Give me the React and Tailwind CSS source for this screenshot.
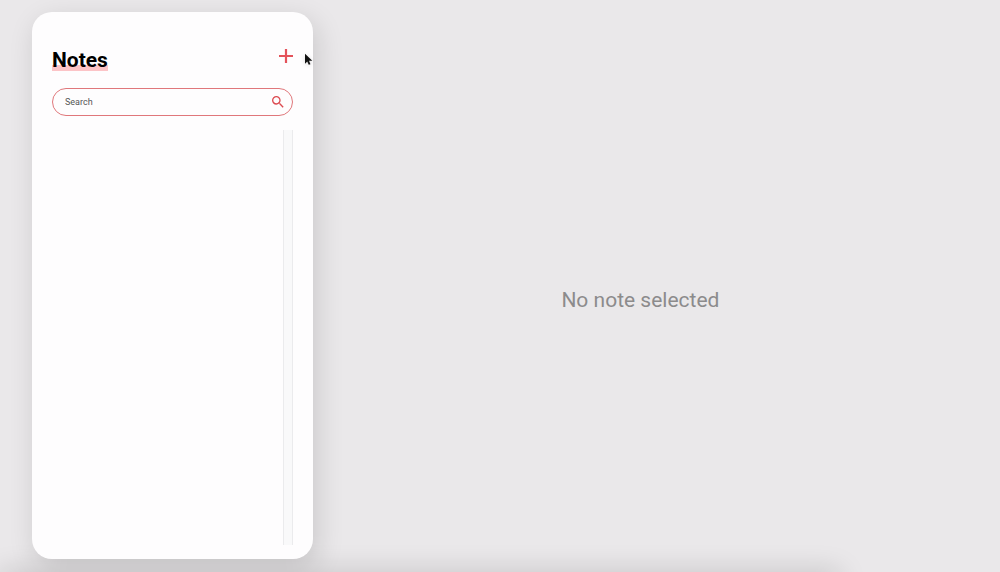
import React from 'react';
import { MdSearch } from 'react-icons/md';

function PlusIcon() {
  return (
    <svg viewBox="0 0 14 14" className="size-3.5" fill="#e4525a" aria-hidden="true">
      <path d="M5.9 0h2.2v5.9H14v2.2H8.1V14H5.9V8.1H0V5.9h5.9z" />
    </svg>
  );
}

function Pointer() {
  return (
    <svg
      viewBox="0 0 12 18"
      className="pointer-events-none absolute top-10 right-0 h-3.5 w-2 overflow-visible drop-shadow-sm"
      aria-hidden="true"
    >
      <path
        d="M0 1v15l3.4-3.2 2.2 5 2.6-1.1-2.2-4.9H11z"
        fill="#111"
      />
    </svg>
  );
}

function Sidebar() {
  return (
    <aside className="relative flex w-[30%] flex-col rounded-[20px] bg-[#fefdfe] px-5 pt-9 pb-3.5 shadow-[4px_8px_28px_rgba(0,0,0,0.14)]">
      <header className="flex items-start justify-between">
        <h1 className="bg-[linear-gradient(#fcc4c7,#fcc4c7)] bg-[length:100%_6px] bg-[position:0_17px] bg-no-repeat text-[21px] leading-6 font-bold text-black">
          Notes
        </h1>
        <button type="button" aria-label="Add note" className="pt-px">
          <PlusIcon />
        </button>
      </header>
      <form
        role="search"
        className="mt-4 flex h-7 shrink-0 items-center rounded-full border border-[#e0777b] pr-1.5 pl-3"
        onSubmit={(e) => e.preventDefault()}
      >
        <input
          type="text"
          aria-label="Search"
          placeholder="Search"
          className="min-w-0 flex-1 bg-transparent text-[9px] leading-3 text-[#333] outline-none placeholder:text-[#555]"
        />
        <button type="submit" aria-label="Submit search" className="text-[#dc4a50]">
          <MdSearch className="size-4" />
        </button>
      </form>
      <div className="mt-3.5 flex min-h-0 flex-1 justify-end">
        <div className="w-2.5 border-x border-[#ebebed] bg-[#f9f9fa]" />
      </div>
      <Pointer />
    </aside>
  );
}

export default function App() {
  return (
    <div className="relative flex h-screen overflow-hidden bg-[#eae8ea] px-8 pt-3 pb-[13px] font-[Roboto,sans-serif]">
      <div className="pointer-events-none absolute -bottom-5 left-0 h-5 w-[84%] shadow-[0_0_28px_rgba(0,0,0,0.18)]" />
      <Sidebar />
      <main className="flex flex-1 items-center justify-center pt-7">
        <p className="text-[21px] leading-7 text-[#8c8b8c]">No note selected</p>
      </main>
    </div>
  );
}
